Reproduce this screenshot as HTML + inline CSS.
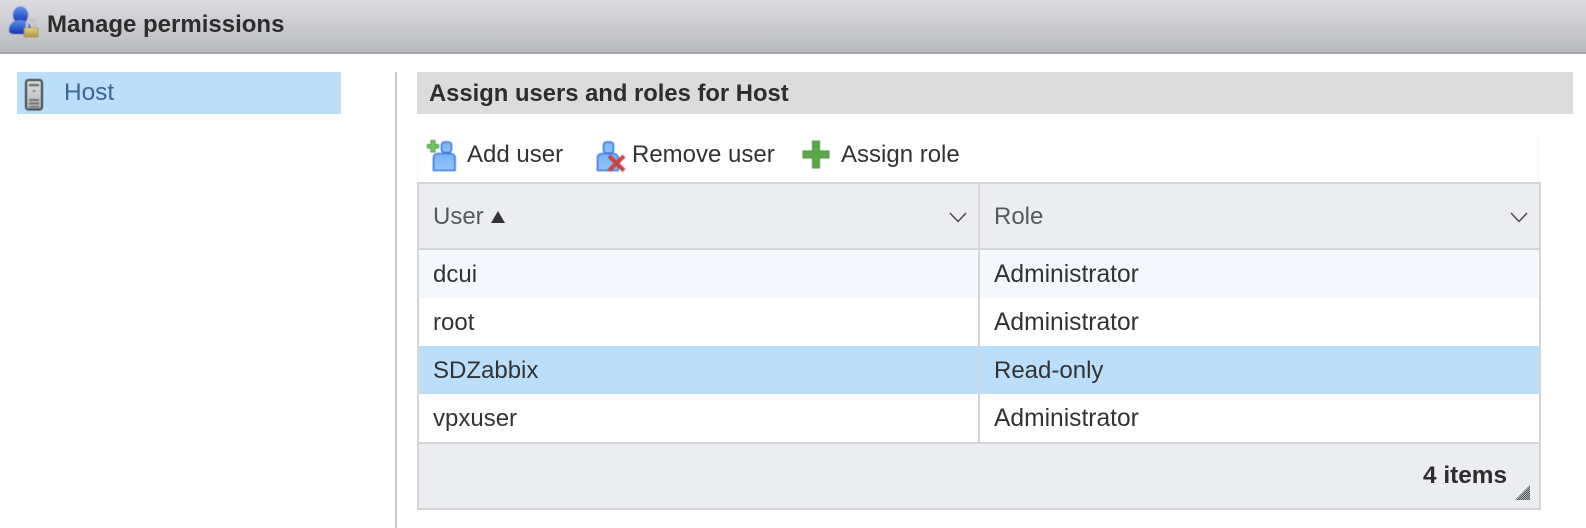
<!DOCTYPE html>
<html><head><meta charset="utf-8"><style>
html,body{margin:0;padding:0;background:#fff}
body{width:1586px;height:528px;position:relative;overflow:hidden;font-family:"Liberation Sans",sans-serif;color:#333}
div{position:absolute}
.t{white-space:nowrap;font-size:24px;line-height:26px;color:#333}
svg{position:absolute;overflow:visible}
.i{filter:blur(.4px)}
</style></head><body>
<div style="left:0;top:0;width:1586px;height:52px;background:linear-gradient(#dcdde2,#b9babd)"></div>
<div style="left:0;top:52px;width:1586px;height:2px;background:#a8a8a8"></div>
<svg class="i" style="left:0;top:0" width="50" height="50" viewBox="0 0 50 50">
<defs><linearGradient id="b" x1="0" y1="0" x2="0" y2="1"><stop offset="0" stop-color="#5f90ea"/><stop offset="1" stop-color="#1234b4"/></linearGradient>
<linearGradient id="g" x1="0" y1="0" x2="0" y2="1"><stop offset="0" stop-color="#e8d27c"/><stop offset="1" stop-color="#b0923a"/></linearGradient></defs>
<ellipse cx="20.500" cy="15" rx="7.500" ry="8.500" fill="url(#b)"/>
<path d="M9 30C9 25 13 20 20 20C26 20 30 23 31 28V34H15C11 34 9 33 9 30Z" fill="url(#b)"/>
<path d="M27 29V24C27 21 29 20 31 20C33 20 35 21 35 24V29" fill="none" stroke="#c4c4bf" stroke-width="2.800"/>
<rect x="24" y="28" width="14" height="9" rx="1" fill="url(#g)" stroke="#a08a3a" stroke-width=".6"/>
</svg>
<div class="t" style="left:47px;top:12px;font-weight:bold;color:#2d2d2d">Manage permissions</div>

<div style="left:17px;top:72px;width:324px;height:42px;background:#bbdefa"></div>
<svg class="i" style="left:25px;top:79px" width="18" height="32" viewBox="0 0 18 32">
<defs><linearGradient id="s" x1="0" y1="0" x2="0" y2="1"><stop offset="0" stop-color="#dcdcd8"/><stop offset="1" stop-color="#b8b8b4"/></linearGradient></defs>
<rect x="1" y="1" width="16" height="29.500" rx="2.500" fill="url(#s)" stroke="#3a444c" stroke-width="2"/>
<rect x="4" y="5" width="10" height="2.200" fill="#666"/>
<rect x="7.500" y="11" width="3" height="2" fill="#888"/>
<rect x="4" y="20" width="10" height="2" fill="#707070"/>
<rect x="4" y="23.500" width="10" height="2" fill="#707070"/>
<rect x="4" y="27" width="10" height="1.600" fill="#707070"/>
</svg>
<div class="t" style="left:64px;top:80px;color:#3f6496;font-size:24.400px">Host</div>

<div style="left:395px;top:72px;width:2px;height:456px;background:#cbcbcb"></div>

<div style="left:417px;top:72px;width:1156px;height:42px;background:#dcdcdc"></div>
<div class="t" style="left:429px;top:81px;font-weight:bold;font-size:23.800px;color:#2d2d2d">Assign users and roles for Host</div>

<div style="left:417px;top:132px;width:1px;height:50px;background:#f8f8f8"></div>
<div style="left:1538px;top:132px;width:1px;height:50px;background:#f8f8f8"></div>

<svg class="i" style="left:0;top:0" width="700" height="180" viewBox="0 0 700 180">
<defs><linearGradient id="u" x1="0" y1="0" x2="0" y2="1"><stop offset="0" stop-color="#78b2f6"/><stop offset="1" stop-color="#92c4fb"/></linearGradient></defs>
<rect x="441.500" y="142" width="10" height="10.500" rx="3" fill="url(#u)" stroke="#3a78e0" stroke-width="1.600"/>
<path d="M433.500 170.500V158C433.500 155 435.500 153.500 438.500 153.500H450C453 153.500 455 155 455 158V170.500Z" fill="url(#u)" stroke="#3a78e0" stroke-width="1.600"/>
<path d="M431 140.500H435V144.500H438.500V148H435V152H431V148H427.500V144.500H431Z" fill="#74c868" stroke="#4a9a48" stroke-width="1"/>
<rect x="603.500" y="142" width="10" height="11" rx="3" fill="url(#u)" stroke="#3a78e0" stroke-width="1.600"/>
<path d="M597.500 170.500V158C597.500 155 599.500 153.500 602.500 153.500H613C616 153.500 618 155 618 158V170.500Z" fill="url(#u)" stroke="#3a78e0" stroke-width="1.600"/>
<path d="M609 156L624 170.500M624 156L609 170.500" stroke="#c8453c" stroke-width="4.200"/>
</svg>
<div class="t" style="left:467px;top:142px">Add user</div>
<div class="t" style="left:632px;top:142px">Remove user</div>

<svg class="i" style="left:802px;top:140px" width="28" height="29" viewBox="0 0 28 29">
<path d="M10.500 1H17.500V11H27V18H17.500V28H10.500V18H1V11H10.500Z" fill="#58a848" stroke="#4a9040" stroke-width="1" stroke-linejoin="round"/>
</svg>
<div class="t" style="left:841px;top:142px">Assign role</div>

<div style="left:417px;top:182px;width:1124px;height:328px;background:#d5d5d5"></div>
<div style="left:419px;top:184px;width:559px;height:64px;background:#ecedf1"></div>
<div style="left:980px;top:184px;width:559px;height:64px;background:#ecedf1"></div>
<div style="left:419px;top:250px;width:559px;height:48px;background:#f4f7fb"></div>
<div style="left:980px;top:250px;width:559px;height:48px;background:#f4f7fb"></div>
<div style="left:419px;top:298px;width:559px;height:48px;background:#fff"></div>
<div style="left:980px;top:298px;width:559px;height:48px;background:#fff"></div>
<div style="left:419px;top:346px;width:559px;height:48px;background:#bbdefa"></div>
<div style="left:980px;top:346px;width:559px;height:48px;background:#bbdefa"></div>
<div style="left:419px;top:394px;width:559px;height:48px;background:#fff"></div>
<div style="left:980px;top:394px;width:559px;height:48px;background:#fff"></div>
<div style="left:419px;top:444px;width:1120px;height:64px;background:#ecedf1"></div>

<div class="t" style="left:433px;top:204px;color:#555a5e">User</div>
<svg style="left:491px;top:211px" width="15" height="12"><path d="M0 12L7 0L14 12Z" fill="#333"/></svg>
<svg style="left:949px;top:212px" width="18" height="11"><path d="M1 1L9 9.500L17 1" fill="none" stroke="#444" stroke-width="1.400"/></svg>
<div class="t" style="left:994px;top:204px;color:#555a5e">Role</div>
<svg style="left:1510px;top:212px" width="18" height="11"><path d="M1 1L9 9.500L17 1" fill="none" stroke="#444" stroke-width="1.400"/></svg>

<div class="t" style="left:433px;top:262px">dcui</div>
<div class="t" style="left:994px;top:262px;font-size:24.600px">Administrator</div>
<div class="t" style="left:433px;top:310px">root</div>
<div class="t" style="left:994px;top:310px;font-size:24.600px">Administrator</div>
<div class="t" style="left:433px;top:358px">SDZabbix</div>
<div class="t" style="left:994px;top:358px">Read-only</div>
<div class="t" style="left:433px;top:406px">vpxuser</div>
<div class="t" style="left:994px;top:406px;font-size:24.600px">Administrator</div>

<div class="t" style="left:1423px;top:463px;font-weight:bold;font-size:24.400px;color:#2d2d2d">4 items</div>
<svg style="left:1515px;top:485px" width="16" height="16" viewBox="0 0 16 16">
<defs><pattern id="c" width="2" height="2" patternUnits="userSpaceOnUse"><rect width="2" height="2" fill="#b0b1b3"/><rect width="1" height="1" fill="#55565a"/><rect x="1" y="1" width="1" height="1" fill="#55565a"/></pattern></defs>
<path d="M15 0V15H0Z" fill="url(#c)"/></svg>
</body></html>
